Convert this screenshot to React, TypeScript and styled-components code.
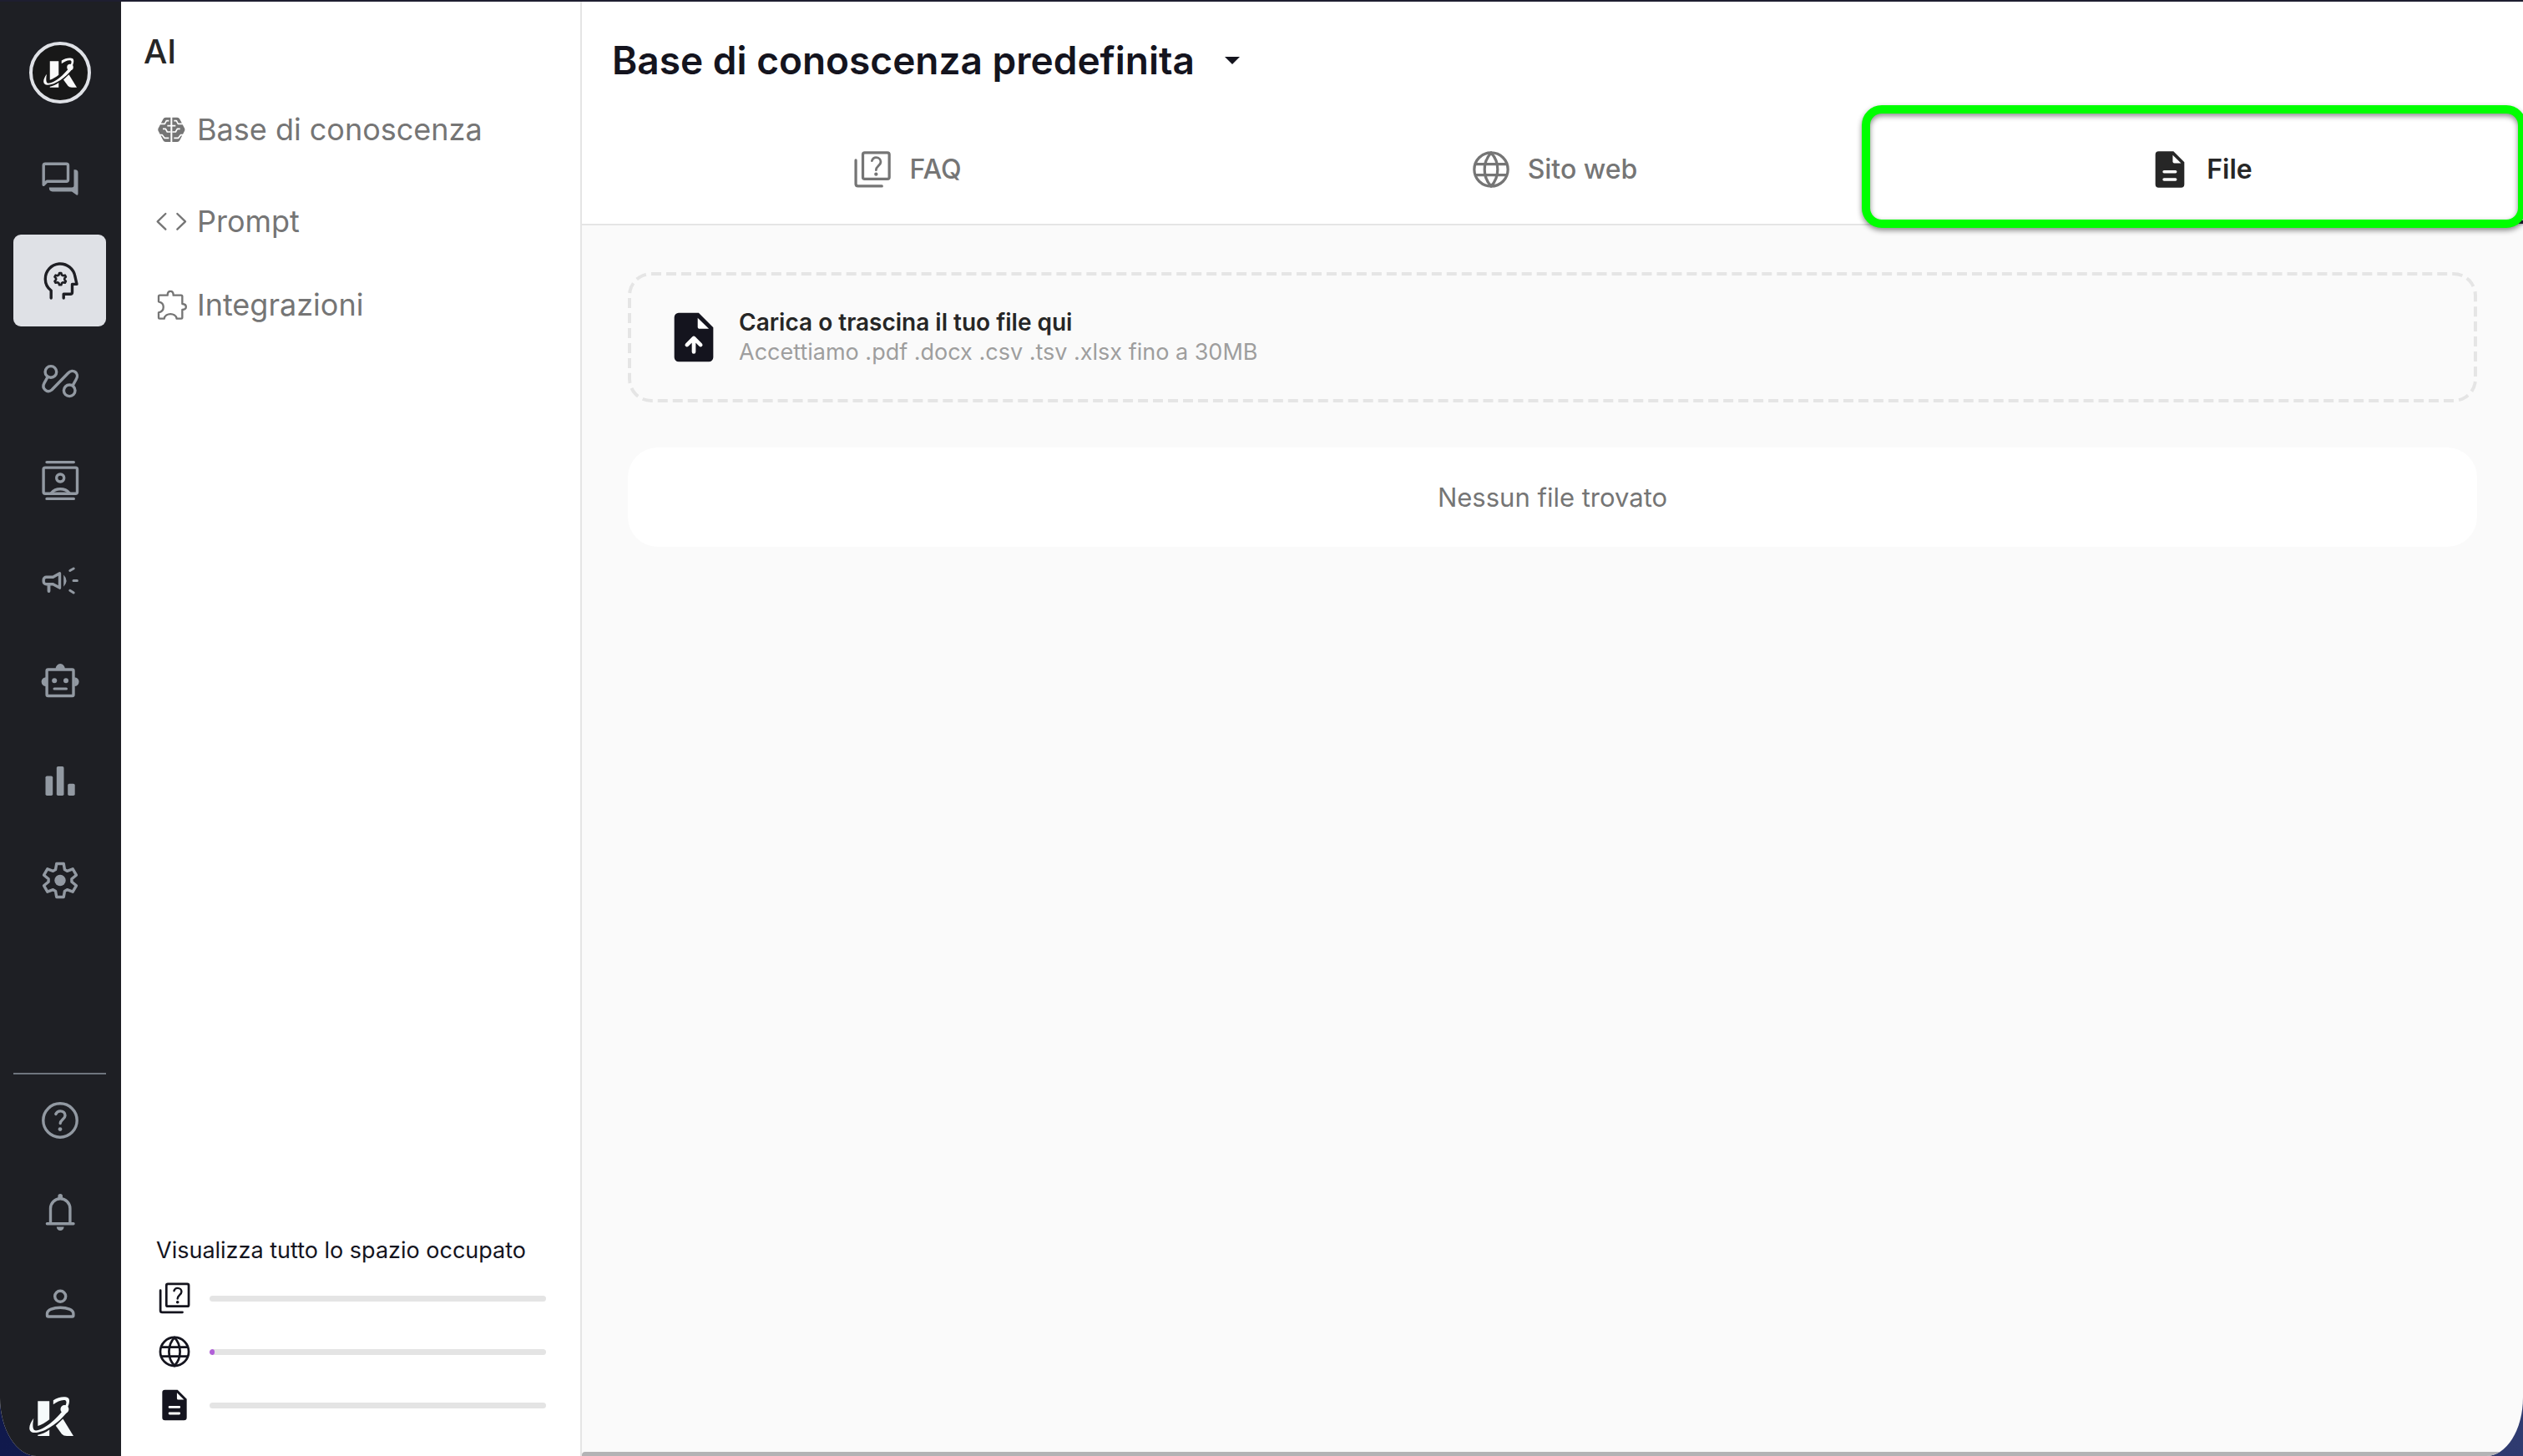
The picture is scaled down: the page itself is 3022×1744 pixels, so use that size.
import React from "react";
import styled, { createGlobalStyle } from "styled-components";

const GlobalStyle = createGlobalStyle`
  *, *::before, *::after { box-sizing: border-box; }
  body {
    margin: 0;
    background: linear-gradient(90deg, #10194c, #2f3b70);
    font-family: Inter, "Liberation Sans", sans-serif;
    color: #262626;
  }
  button, select { font: inherit; color: inherit; border: 0; background: none; padding: 0; margin: 0; }
  ul { list-style: none; margin: 0; padding: 0; }
  h1, p { margin: 0; }
  svg { display: block; flex: none; }
`;

const Window = styled.div`
  display: flex;
  height: 100vh;
  overflow: hidden;
  border-top: 2px solid #1e1e30;
  border-radius: 0 0 44px 44px / 0 0 70px 70px;
  background: #fafafa;
`;

const Rail = styled.aside`
  display: flex;
  flex-direction: column;
  flex: none;
  width: 145px;
  padding: 48px 18px 24px 16px;
  background: #1e1f24;
`;

const Avatar = styled.button`
  display: grid;
  place-items: center;
  align-self: center;
  width: 74px;
  height: 74px;
  border: 4px solid #dfe1e6;
  border-radius: 50%;
  background: #181818;
  color: #fafafa;
`;

const RailNav = styled.nav`
  display: flex;
  flex-direction: column;
  gap: 10px;
  margin-top: 37px;
`;

const RailFooter = styled.nav`
  display: flex;
  flex-direction: column;
  margin-top: auto;
  border-top: 2px solid #6f757e;
`;

const RailButton = styled.button<{ $active?: boolean }>`
  display: grid;
  place-items: center;
  height: 110px;
  border-radius: 9px;
  background: ${(p) => (p.$active ? "#dfe1e6" : "transparent")};
  color: ${(p) => (p.$active ? "#1e1f24" : "#9299a2")};
`;

const Brand = styled.div`
  margin: 56px 0 0 19px;
  color: #f6fafb;
`;

const Panel = styled.aside`
  display: flex;
  flex-direction: column;
  flex: none;
  width: 552px;
  padding: 32px 41px 39px 42px;
  border-right: 2px solid #e5e5e5;
  background: #fff;
`;

const PanelTitle = styled.h1`
  margin-left: -15px;
  font-size: 40px;
  line-height: 56px;
  font-weight: 500;
`;

const Menu = styled.ul`
  margin-top: 15px;
`;

const MenuItem = styled.li<{ $spaced?: boolean }>`
  margin-bottom: ${(p) => (p.$spaced ? "10px" : "0")};
`;

const MenuLink = styled.a`
  display: flex;
  align-items: center;
  gap: 10px;
  height: 100px;
  font-size: 36px;
  line-height: 48px;
  color: #757575;
  text-decoration: none;
`;

const Storage = styled.section`
  display: flex;
  flex-direction: column;
  gap: 20px;
  margin-top: auto;
  color: #14141e;
`;

const StorageTitle = styled.p`
  font-size: 27px;
  line-height: 30px;
  white-space: nowrap;
`;

const StorageRow = styled.div`
  display: flex;
  align-items: center;
  gap: 20px;
`;

const Track = styled.div`
  flex: 1;
  height: 7px;
  border-radius: 4px;
  overflow: hidden;
  background: #e4e4e4;
`;

const Fill = styled.div`
  height: 100%;
  border-radius: 4px;
  background: #b160d8;
`;

const Main = styled.main`
  display: flex;
  flex-direction: column;
  flex: 1;
  min-width: 0;
`;

const Header = styled.header`
  border-bottom: 2px solid #e5e5e5;
  background: #fff;
`;

const TitleRow = styled.div`
  display: flex;
  align-items: center;
  gap: 36px;
  height: 136px;
  padding: 4px 0 0 36px;
  color: #14141e;
`;

const BaseSelect = styled.select`
  appearance: none;
  font-size: 46px;
  line-height: 56px;
  font-weight: 600;
`;

const Tabs = styled.div`
  display: grid;
  grid-template-columns: repeat(3, 1fr);
`;

const Tab = styled.button<{ $active?: boolean }>`
  position: relative;
  display: flex;
  align-items: center;
  justify-content: center;
  gap: 18px;
  height: 130px;
  padding-left: 2px;
  font-size: 32px;
  line-height: 40px;
  font-weight: ${(p) => (p.$active ? 600 : 500)};
  color: ${(p) => (p.$active ? "#262626" : "#757575")};

  &::before {
    content: "";
    display: ${(p) => (p.$active ? "block" : "none")};
    position: absolute;
    inset: auto 0 0 0;
    height: 4px;
    background: #1f1f35;
  }

  &::after {
    content: "";
    display: ${(p) => (p.$active ? "block" : "none")};
    position: absolute;
    inset: -12px -4px -5px -17px;
    border: 10px solid #00ff00;
    border-radius: 24px;
    filter: drop-shadow(0 3px 3px rgba(0, 0, 0, 0.45));
  }
`;

const Content = styled.div`
  display: flex;
  flex-direction: column;
  gap: 54px;
  flex: 1;
  padding: 56px 55px;
`;

/* The inner layer trims the 6px dashes to a 4px line, which keeps the dashes long. */
const DropZone = styled.label`
  position: relative;
  isolation: isolate;
  display: flex;
  align-items: center;
  gap: 19px;
  padding: 36px 38px;
  border: 6px dashed #e5e5e5;
  border-radius: 28px;
  font-size: 28px;
  line-height: 36px;

  &::before {
    content: "";
    position: absolute;
    z-index: -1;
    inset: -2px;
    border-radius: 24px;
    background: #fafafa;
  }
`;

const UploadMark = styled.span`
  color: #14141e;
`;

const FileInput = styled.input`
  position: absolute;
  width: 1px;
  height: 1px;
  opacity: 0;
`;

const DropTitle = styled.div`
  font-weight: 600;
`;

const DropHint = styled.div`
  font-size: 27px;
  color: #9e9e9e;
`;

const EmptyCard = styled.div`
  padding: 40px;
  border-radius: 36px;
  background: #fff;
  color: #757575;
  font-size: 31px;
  line-height: 39px;
  text-align: center;
`;

const ScrollThumb = styled.div`
  height: 5px;
  border-top-left-radius: 4px;
  background: #b3b3b5;
`;

const Line = ({ children }: { children: React.ReactNode }) => (
  <svg width="52" height="52" viewBox="0 0 52 52" fill="none" stroke="currentColor" strokeWidth="3.4" strokeLinecap="round" strokeLinejoin="round" aria-hidden="true">
    {children}
  </svg>
);

const gearPath = (cx: number, cy: number, outer: number, inner: number, tip: number, root: number) => {
  const pts: string[] = [];
  for (let k = 0; k < 6; k++) {
    const a = k * 60 - 90;
    [[a - root, inner], [a - tip, outer], [a + tip, outer], [a + root, inner]].forEach(([deg, r]) => {
      const t = (deg * Math.PI) / 180;
      pts.push(`${(cx + r * Math.cos(t)).toFixed(2)} ${(cy + r * Math.sin(t)).toFixed(2)}`);
    });
  }
  return `M${pts.join("L")}Z`;
};

const Logo = ({ width }: { width: number }) => (
  <svg width={width} height={Math.round((width * 142) / 160)} viewBox="104 1268 160 142" fill="currentColor" aria-hidden="true">
    <path d="M135 1284H177V1350C163 1361 149 1369 135 1374Z" />
    <path d="M135 1410H177V1387C164 1397 150 1403 135 1406Z" />
    <path d="M200 1373 226 1348 264 1410H240Q228 1410 222 1403Z" />
    <path d="M120 1346C100 1372 98 1398 124 1398C160 1398 212 1362 244 1320L230 1312C205 1348 155 1390 128 1390C116 1390 115 1372 120 1346Z" />
    <circle cx="232" cy="1313" r="15" />
    <path d="M191 1281C210 1268 235 1266 246 1273C252 1280 248 1296 243 1306L234 1302C240 1290 240 1282 232 1280C218 1279 204 1286 191 1296Z" />
  </svg>
);

const ChatIcon = () => (
  <Line>
    <path d="M6.2 31.3V8.2a2 2 0 0 1 2-2H33.5a2 2 0 0 1 2 2V25.3a2 2 0 0 1-2 2H10.2Z" />
    <path stroke="none" fill="currentColor" d="M42.5 13.2H44a3.5 3.5 0 0 1 3.5 3.5V42q0 2.8-2.2 1.2L40 39.5H16.8q-4-.2-4-5H40a2.5 2.5 0 0 0 2.5-2.5Z" />
  </Line>
);

const HeadIcon = () => (
  <Line>
    <path d="M15.2 47V38C10.7 34.6 8.3 29.7 8.3 24.2A17.9 17.9 0 0 1 43.9 21.2L46 30.4H40.5V39.9q0 2.3-2.3 2.3H30.2V47" />
    <path d={gearPath(26.2, 24.2, 7.2, 5.2, 9, 20)} strokeWidth="2.6" />
  </Line>
);

const FlowIcon = () => (
  <Line>
    <circle cx="14.9" cy="15.4" r="6.8" />
    <circle cx="37.2" cy="37.8" r="6.8" />
    <path d="M11 21.6 7 28.8C3.5 35.2 10.5 41.5 16 37L35.500 17C41.5 10.5 49.5 17.5 45.3 24.2L41.2 31.6" />
  </Line>
);

const ContactsIcon = () => (
  <Line>
    <path d="M10 3.6H42.3M10 47.4H42.3" />
    <rect x="6.1" y="10.1" width="40.4" height="31.2" rx="2" />
    <circle cx="26.2" cy="22.5" r="4.5" />
    <path d="M15.5 40.5C18 37.4 21.8 35.7 26.2 35.7S34.5 37.4 37 40.5" />
  </Line>
);

const MegaphoneIcon = () => (
  <Line>
    <path d="M17.5 21.3H9.5a3.3 3.3 0 0 0-3.3 3.3V26.5a3.3 3.3 0 0 0 3.3 3.3H17.5L25.500 34.1V16.7Z" />
    <path d="M12.5 30.500V38" strokeWidth="3.8" />
    <path stroke="none" fill="currentColor" d="M30.2 18.5Q36.8 25.5 30.2 32.7Z" />
    <path d="M37.8 13.500 42.2 11M42 25.5H46.4M37.8 37.3 42.2 40" strokeWidth="3" />
  </Line>
);

const RobotIcon = () => (
  <Line>
    <rect x="10.1" y="12" width="31.9" height="31.5" rx="1.5" />
    <g stroke="none" fill="currentColor">
      <path d="M20.500 11.5a5.7 6.4 0 0 1 11.4 0ZM9 21.2a5.4 5.4 0 0 0 0 10.8ZM43.2 21.2a5.4 5.4 0 0 1 0 10.8Z" />
      <circle cx="19.2" cy="25.2" r="3" />
      <circle cx="33" cy="25.2" r="3" />
    </g>
    <path d="M19 35H33.5" strokeWidth="3" />
  </Line>
);

const BarsIcon = () => (
  <Line>
    <g stroke="none" fill="currentColor">
      <rect x="8.5" y="19.5" width="8.7" height="23.6" rx="1.8" />
      <rect x="21.8" y="7.9" width="8.7" height="35.2" rx="1.8" />
      <rect x="35.2" y="28.8" width="8.5" height="14.3" rx="1.8" />
    </g>
  </Line>
);

const GearIcon = () => (
  <Line>
    <path d={gearPath(26, 24.5, 20.4, 14, 12, 23)} />
    <circle cx="26" cy="24.5" r="6.7" stroke="none" fill="currentColor" />
  </Line>
);

const HelpIcon = () => (
  <Line>
    <circle cx="26" cy="26" r="20.2" />
    <path d="M20.8 18.5C21.8 16 23.5 14.9 26.2 14.9C29.6 14.9 32 17 32 20.2C32 24.2 26.2 25.2 26.2 29.5" />
    <circle cx="26" cy="36.6" r="2.4" stroke="none" fill="currentColor" />
  </Line>
);

const BellIcon = () => (
  <Line>
    <path d="M14.5 39V21.5A11.7 11.7 0 0 1 37.9 21.5V39M10.4 39.7H42" />
    <path stroke="none" fill="currentColor" d="M23.4 9V6.8a2.8 2.8 0 0 1 5.6 0V9ZM21.8 43.6H30.6a4.4 4.4 0 0 1-8.8 0Z" />
  </Line>
);

const PersonIcon = () => (
  <Line>
    <circle cx="26.2" cy="16.8" r="6.5" />
    <path d="M12 41a1.5 1.5 0 0 1-1.5-1.5V37.5C10.5 32.6 18 30.3 26.2 30.3S41.9 32.6 41.9 37.5V39.5a1.5 1.5 0 0 1-1.5 1.5Z" />
  </Line>
);

const BrainIcon = () => (
  <svg width="39" height="39" viewBox="560 413 117 117" aria-hidden="true">
    <path fill="currentColor" d="M612 427V515H594Q588 515 585 509L567 474V468L585 433Q588 427 594 427ZM618 427V515H636Q642 515 645 509L663 474V468L645 433Q642 427 636 427Z" />
    <path fill="none" stroke="#fff" strokeWidth="5" strokeLinejoin="round" d="M574 450H591L597 439H606M656 450H639L633 439H624M574 490H582L590 501H606M656 490H648L640 501H624M600 457H630M584 468H594L600 479H612M646 468H636L630 479H618" />
  </svg>
);

const CodeIcon = () => (
  <svg width="39" height="39" viewBox="560 743 117 117" fill="none" stroke="currentColor" strokeWidth="7" strokeLinecap="round" strokeLinejoin="round" aria-hidden="true">
    <path d="M594 773 565 801 594 829M636 773 665 801 636 829" />
  </svg>
);

const PuzzleIcon = () => (
  <svg width="39" height="39" viewBox="560 1040 117 117" fill="none" stroke="currentColor" strokeWidth="7" strokeLinejoin="round" aria-hidden="true">
    <path d="M573 1063H601C601 1044 622 1044 622 1063H650Q654 1063 654 1067V1094C672 1095 672 1114 654 1115V1143Q654 1147 650 1147H634C630 1125 593 1125 589 1147H573Q569 1147 569 1143V1125C592 1121 592 1090 569 1086V1067Q569 1063 573 1063Z" />
  </svg>
);

const QuizIcon = ({ size }: { size: number }) => (
  <svg width={size} height={size} viewBox="0 0 24 24" fill="none" stroke="currentColor" strokeWidth="1.5" strokeLinecap="round" strokeLinejoin="round" aria-hidden="true">
    <rect x="6.7" y="2.7" width="14.6" height="14.6" rx="1" />
    <path d="M2.8 6.9V20Q2.8 21.2 4 21.2H17.2" />
    <path strokeWidth="1.3" d="M11.7 7.2C12.1 6 12.9 5.4 14 5.4c1.5 0 2.6 1 2.6 2.4 0 1.9-2.6 2.4-2.6 4.5" />
    <circle cx="14" cy="14.6" r="1" stroke="none" fill="currentColor" />
  </svg>
);

const GlobeIcon = ({ size }: { size: number }) => (
  <svg width={size} height={size} viewBox="0 0 24 24" fill="none" stroke="currentColor" strokeWidth="1.5" aria-hidden="true">
    <circle cx="12" cy="12" r="9.3" />
    <path d="M3.3 9H20.7M3.3 15H20.7M12 2.8C7.2 7.8 7.2 16.2 12 21.2C16.8 16.2 16.8 7.8 12 2.8Z" />
  </svg>
);

const FileIcon = ({ size, upload }: { size: number; upload?: boolean }) => (
  <svg width={size} height={size} viewBox="0 0 24 24" fill="currentColor" aria-hidden="true">
    <path d="M5.8 2H14L20 8V20.2A1.8 1.8 0 0 1 18.2 22H5.8A1.8 1.8 0 0 1 4 20.2V3.8A1.8 1.8 0 0 1 5.8 2Z" />
    <path fill="#fff" d="M13.6 4 18.2 8.5H14.5Q13.6 8.5 13.6 7.6Z" />
    <path
      fill="none"
      stroke="#fff"
      strokeWidth="1.6"
      strokeLinecap="round"
      strokeLinejoin="round"
      d={upload ? "M12 18V12.5M9.2 15.1 12 12.3 14.8 15.1" : "M8.8 13.3H15.1M8.8 17.5H15.1"}
    />
  </svg>
);

const railItems = [
  { label: "Chat", Icon: ChatIcon },
  { label: "AI", Icon: HeadIcon, active: true },
  { label: "Flussi", Icon: FlowIcon },
  { label: "Contatti", Icon: ContactsIcon },
  { label: "Campagne", Icon: MegaphoneIcon },
  { label: "Bot", Icon: RobotIcon },
  { label: "Statistiche", Icon: BarsIcon },
  { label: "Impostazioni", Icon: GearIcon },
];

const footerItems = [
  { label: "Aiuto", Icon: HelpIcon },
  { label: "Notifiche", Icon: BellIcon },
  { label: "Profilo", Icon: PersonIcon },
];

const menuItems = [
  { label: "Base di conoscenza", Icon: BrainIcon, spaced: true },
  { label: "Prompt", Icon: CodeIcon },
  { label: "Integrazioni", Icon: PuzzleIcon },
];

const storageItems = [
  { label: "FAQ", icon: <QuizIcon size={44} />, used: 0 },
  { label: "Sito web", icon: <GlobeIcon size={44} />, used: 1.5 },
  { label: "File", icon: <FileIcon size={44} />, used: 0 },
];

const tabs = [
  { label: "FAQ", icon: <QuizIcon size={52} /> },
  { label: "Sito web", icon: <GlobeIcon size={52} /> },
  { label: "File", icon: <FileIcon size={52} />, active: true },
];

export default function App() {
  return (
    <>
      <GlobalStyle />
      <Window>
        <Rail>
          <Avatar type="button" aria-label="Account">
            <Logo width={40} />
          </Avatar>
          <RailNav>
            {railItems.map(({ label, Icon, active }) => (
              <RailButton key={label} type="button" aria-label={label} $active={active}>
                <Icon />
              </RailButton>
            ))}
          </RailNav>
          <RailFooter>
            {footerItems.map(({ label, Icon }) => (
              <RailButton key={label} type="button" aria-label={label}>
                <Icon />
              </RailButton>
            ))}
          </RailFooter>
          <Brand>
            <Logo width={53} />
          </Brand>
        </Rail>

        <Panel>
          <PanelTitle>AI</PanelTitle>
          <Menu>
            {menuItems.map(({ label, Icon, spaced }) => (
              <MenuItem key={label} $spaced={spaced}>
                <MenuLink href="#">
                  <Icon />
                  {label}
                </MenuLink>
              </MenuItem>
            ))}
          </Menu>
          <Storage>
            <StorageTitle>Visualizza tutto lo spazio occupato</StorageTitle>
            {storageItems.map(({ label, icon, used }) => (
              <StorageRow key={label}>
                {icon}
                <Track role="progressbar" aria-label={label} aria-valuenow={used}>
                  <Fill style={{ width: `${used}%` }} />
                </Track>
              </StorageRow>
            ))}
          </Storage>
        </Panel>

        <Main>
          <Header>
            <TitleRow>
              <BaseSelect aria-label="Base di conoscenza">
                <option>Base di conoscenza predefinita</option>
              </BaseSelect>
              <svg width="18" height="9" viewBox="0 0 18 9" fill="currentColor" aria-hidden="true">
                <path d="M0 0H18L9 9Z" />
              </svg>
            </TitleRow>
            <Tabs role="tablist">
              {tabs.map(({ label, icon, active }) => (
                <Tab key={label} type="button" role="tab" aria-selected={!!active} $active={active}>
                  {icon}
                  {label}
                </Tab>
              ))}
            </Tabs>
          </Header>
          <Content>
            <DropZone>
              <FileInput type="file" accept=".pdf,.docx,.csv,.tsv,.xlsx" />
              <UploadMark>
                <FileIcon size={70} upload />
              </UploadMark>
              <div>
                <DropTitle>Carica o trascina il tuo file qui</DropTitle>
                <DropHint>Accettiamo .pdf .docx .csv .tsv .xlsx fino a 30MB</DropHint>
              </div>
            </DropZone>
            <EmptyCard>Nessun file trovato</EmptyCard>
          </Content>
          <ScrollThumb />
        </Main>
      </Window>
    </>
  );
}
